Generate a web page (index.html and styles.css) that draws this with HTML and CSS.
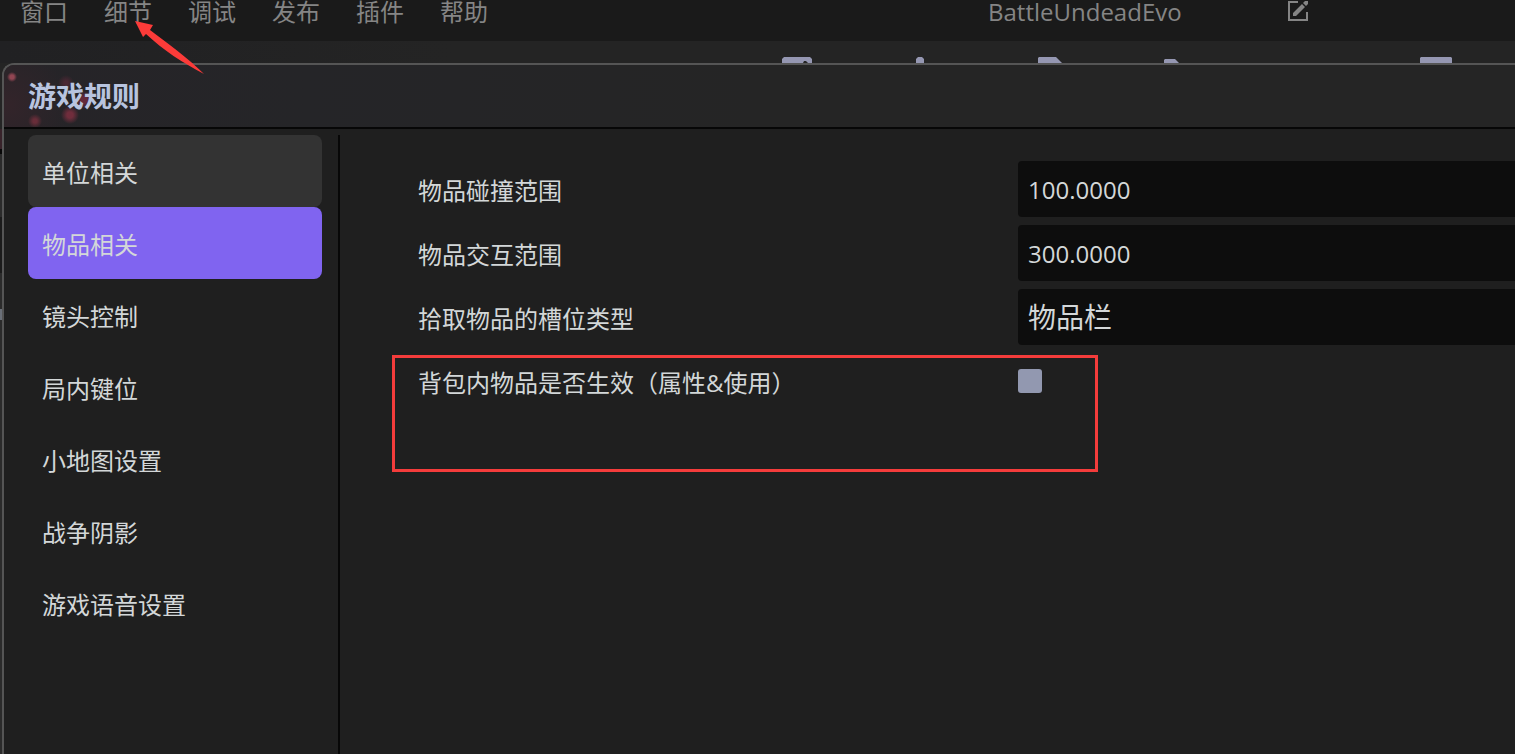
FILE: index.html
```html
<!DOCTYPE html>
<html lang="zh-CN">
<head>
	<meta charset="utf-8">
	<title>游戏规则</title>
	<link rel="stylesheet" href="styles.css">
</head>
<body>
<header class="topbar">
	<nav class="menu">
		<button>窗口</button>
		<button>细节</button>
		<button>调试</button>
		<button>发布</button>
		<button>插件</button>
		<button>帮助</button>
	</nav>
	<span class="project">BattleUndeadEvo</span>
	<button class="edit" aria-label="重命名">
		<svg width="22" height="22" viewBox="0 0 22 22">
			<path d="M11 2H2v18h18v-8" fill="none" stroke="#858585" stroke-width="2"/>
			<path d="M6 16v-3L15 4l3 3-9 9zM16 3l2-2h3v3l-2 2z" fill="#858585"/>
		</svg>
	</button>
</header>
<div class="toolbar">
	<button aria-label="保存"><svg width="32" height="32"><path d="M2 2l2-2h26l2 2v30H2z"/><path d="M23 6l1-2h2l2 2z" fill="#252525"/></svg></button>
	<button aria-label="移动"><svg width="32" height="32"><path d="M8 2l2-2h4l2 2v8H8z"/></svg></button>
	<button aria-label="文件"><svg width="32" height="32"><path d="M2 1l1-1h17l6 6v26H2z"/></svg></button>
	<button aria-label="复制"><svg width="32" height="32"><path d="M0 3l1-1h10l6 6v20H0z"/></svg></button>
	<button aria-label="更多"></button>
	<button aria-label="窗口"><svg width="32" height="32"><path d="M0 1l1-1h30l1 1v31H0z"/></svg></button>
</div>
<main class="dialog">
	<div class="title"><h1>游戏规则</h1></div>
	<div class="content">
		<nav class="side">
			<button class="item hover">单位相关</button>
			<button class="item active">物品相关</button>
			<button class="item">镜头控制</button>
			<button class="item">局内键位</button>
			<button class="item">小地图设置</button>
			<button class="item">战争阴影</button>
			<button class="item">游戏语音设置</button>
		</nav>
		<form class="form">
			<div class="row">
				<label for="collide">物品碰撞范围</label>
				<input class="field" id="collide" type="text" value="100.0000">
			</div>
			<div class="row">
				<label for="interact">物品交互范围</label>
				<input class="field" id="interact" type="text" value="300.0000">
			</div>
			<div class="row">
				<label for="slot">拾取物品的槽位类型</label>
				<select class="field slot" id="slot"><option>物品栏</option></select>
			</div>
			<div class="row">
				<label for="bag">背包内物品是否生效（属性&amp;使用）</label>
				<input class="check" id="bag" type="checkbox">
				<div class="mark"></div>
			</div>
		</form>
	</div>
</main>
<svg class="arrow" width="70" height="56" viewBox="0 0 70 56">
	<path d="M1 1L19 5L16 10C32 22 54 38 70 54C49 43 29 30 12 14L9 17z" fill="#fc3b39"/>
</svg>
</body>
</html>
```

FILE: styles.css
```css
*{
	box-sizing: border-box;
}
body{
	margin: 0;
	height: 100vh;
	display: flex;
	flex-direction: column;
	overflow: hidden;
	position: relative;
	background: linear-gradient(#242424 129px, #38232a 129px, #38232a 149px, #080808 149px, #080808 154px, #2b2b2b 154px, #2b2b2b 217px, #1b1b1b 217px, #1b1b1b 273px, #2b2b2b 273px, #2b2b2b 309px, #6a6f78 309px, #6a6f78 320px, #2b2b2b 320px);
	font-family: "Open Sans","Noto Sans CJK SC",sans-serif;
	font-size: 24px;
	color: #d3d7d8;
}
button{
	padding: 0;
	border: 0;
	background: none;
	font: inherit;
	color: inherit;
	text-align: left;
}
svg{
	display: block;
}
.topbar{
	display: flex;
	align-items: flex-start;
	padding: 0 20px 17px;
	background: #1a1a1a;
	color: #858585;
	line-height: 24px;
}
.menu{
	display: flex;
	gap: 36px;
}
.project{
	width: 299px;
	margin-left: 500px;
}
.toolbar{
	display: flex;
	gap: 96px;
	height: 22px;
	padding: 16px 0 0 780px;
	overflow: hidden;
	background: linear-gradient(90deg, #212123, #242424 30%);
	fill: #9597b2;
}
.toolbar button{
	flex: 0 0 32px;
	height: 32px;
}
.dialog{
	flex: 1;
	display: flex;
	flex-direction: column;
	margin-left: 2px;
	border: solid #555;
	border-width: 2px 0 0 2px;
	border-radius: 12px 0 0 0;
	background: #1f1f1f;
}
.title{
	padding: 0 24px;
	border-bottom: 2px solid #070707;
	border-radius: 10px 0 0 0;
	background:
		radial-gradient(circle at 8px 12px, #914552 2px, transparent 5px),
		radial-gradient(circle at 31px 56px, #682d39 2px, transparent 7px),
		radial-gradient(circle at 66px 50px, #702d3c 3px, transparent 9px),
		radial-gradient(circle at 80px 35px, #642a3b 3px, transparent 9px),
		radial-gradient(circle at 62px 18px, #4a2733 2px, transparent 8px),
		radial-gradient(circle at 4px 40px, #33242a, transparent 60px),
		linear-gradient(90deg, #262428, #252528 20%, #252525 50%);
}
h1{
	margin: 0;
	font-size: 28px;
	line-height: 62px;
	color: #b8c4df;
}
.content{
	flex: 1;
	display: flex;
	padding-top: 6px;
}
.side{
	display: flex;
	flex-direction: column;
	width: 336px;
	padding: 0 16px 0 24px;
	border-right: 2px solid #070707;
}
.item{
	height: 72px;
	padding: 0 14px;
	border-radius: 8px;
}
.hover{
	background: #333;
}
.active{
	background: #8064f0;
}
.form{
	flex: 1;
	display: flex;
	flex-direction: column;
	gap: 8px;
	padding: 26px 0 0 78px;
}
.row{
	display: grid;
	grid-template-columns: 600px 1fr;
	align-items: center;
	height: 56px;
	position: relative;
}
.field{
	width: 100%;
	height: 56px;
	padding: 0 10px;
	border: 0;
	border-radius: 4px 0 0 4px;
	background: #0d0d0d;
	font: inherit;
	color: inherit;
}
.slot{
	appearance: none;
	font-size: 28px;
}
.check{
	appearance: none;
	width: 24px;
	height: 24px;
	margin: 0;
	border-radius: 3px;
	background: #9298b0;
}
/* red outline over the last option */
.mark{
	position: absolute;
	top: 2px;
	left: -26px;
	width: 706px;
	height: 117px;
	border: 3px solid #f43c3b;
	pointer-events: none;
}
.arrow{
	position: absolute;
	top: 20px;
	left: 134px;
}
```
